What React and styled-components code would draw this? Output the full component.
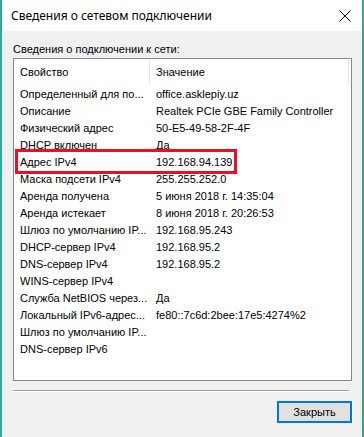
import styled, { createGlobalStyle } from "styled-components";

const GlobalStyle = createGlobalStyle`
  html, body { margin: 0; padding: 0; background: #f0f0f0; }
  #root { width: 364px; height: 437px; }
`;

const rows = [
    ["Определенный для по...", "office.asklepiy.uz"],
    ["Описание", "Realtek PCIe GBE Family Controller"],
    ["Физический адрес", "50-E5-49-58-2F-4F"],
    ["DHCP включен", "Да"],
    ["Адрес IPv4", "192.168.94.139"],
    ["Маска подсети IPv4", "255.255.252.0"],
    ["Аренда получена", "5 июня 2018 г. 14:35:04"],
    ["Аренда истекает", "8 июня 2018 г. 20:26:53"],
    ["Шлюз по умолчанию IP...", "192.168.95.243"],
    ["DHCP-сервер IPv4", "192.168.95.2"],
    ["DNS-сервер IPv4", "192.168.95.2"],
    ["WINS-сервер IPv4", ""],
    ["Служба NetBIOS через...", "Да"],
    ["Локальный IPv6-адрес...", "fe80::7c6d:2bee:17e5:4274%2"],
    ["Шлюз по умолчанию IP...", ""],
    ["DNS-сервер IPv6", ""],
]

export default function App() {
    return (
        <>
            <GlobalStyle />
            <Window>
                <TitleBar>
                    <Title>Сведения о сетевом подключении</Title>
                    <CloseIcon width="12" height="12" viewBox="0 0 12 12">
                        <path d="M0.5 0.5 L11.5 11.5 M11.5 0.5 L0.5 11.5" stroke="#000" strokeWidth="1" />
                    </CloseIcon>
                </TitleBar>

                <Body>
                    <Label>Сведения о подключении к сети:</Label>
                    <ListBox>
                        <Header>
                            <HeaderCell $w={136}>Свойство</HeaderCell>
                            <HeaderCell $w={199}>Значение</HeaderCell>
                        </Header>
                        {rows.map(([name, value], i) => (
                            <Row key={i}>
                                <Cell $w={136}>{name}</Cell>
                                <Cell $w={199}>{value}</Cell>
                            </Row>
                        ))}
                        <Highlight />
                    </ListBox>
                    <Separator />
                    <Footer>
                        <Button>Закрыть</Button>
                    </Footer>
                </Body>
            </Window>
        </>
    )
}

const Window = styled.div`
    width: 364px;
    height: 437px;
    box-sizing: border-box;
    border-left: 2px solid #2bab98;
    border-right: 2px solid #2bab98;
    background: #f0f0f0;
    font-family: "Liberation Sans", Arial, sans-serif;
    font-size: 11px;
    color: #000;
`;

const TitleBar = styled.div`
    height: 31px;
    background: #fff;
    display: flex;
    align-items: center;
    justify-content: space-between;
    padding: 0 11px 0 9px;
`;

const Title = styled.span`
    font-family: "Noto Sans", "Liberation Sans", sans-serif;
    font-size: 12px;
    padding-bottom: 1px;
`;

const CloseIcon = styled.svg`
    display: block;
`;

const Body = styled.div`
    padding: 12px 10px 0 11px;
    display: flex;
    flex-direction: column;
`;

const Label = styled.div`
    line-height: 13px;
    height: 14px;
    margin-bottom: 1px;
`;

const ListBox = styled.div`
    position: relative;
    height: 323px;
    box-sizing: border-box;
    border: 1px solid #828790;
    background: #fff;
`;

const Header = styled.div`
    display: flex;
    height: 25px;
    margin-bottom: 1px;
`;

const HeaderCell = styled.div`
    width: ${p => p.$w}px;
    box-sizing: border-box;
    padding-left: 6px;
    display: flex;
    align-items: center;
    border-right: 1px solid #e5e5e5;
`;

const Row = styled.div`
    display: flex;
    height: 17px;
    align-items: center;
`;

const Cell = styled.div`
    width: ${p => p.$w}px;
    box-sizing: border-box;
    padding-left: 6px;
    white-space: nowrap;
    overflow: hidden;
`;

const Highlight = styled.div`
    position: absolute;
    left: 1px;
    top: 90px;
    width: 222px;
    height: 25px;
    box-sizing: border-box;
    border: 3px solid #e81123;
`;

const Separator = styled.div`
    height: 1px;
    background: #a0a0a0;
    margin: 9px 3px 0 0;
    border-bottom: 1px solid #fff;
`;

const Footer = styled.div`
    display: flex;
    justify-content: flex-end;
    padding-top: 9px;
`;

const Button = styled.button`
    width: 75px;
    height: 22px;
    box-sizing: border-box;
    border: 2px solid #0078d7;
    background: #e1e1e1;
    font-family: "Liberation Sans", Arial, sans-serif;
    font-size: 11px;
    color: #000;
    padding: 0;
`;
